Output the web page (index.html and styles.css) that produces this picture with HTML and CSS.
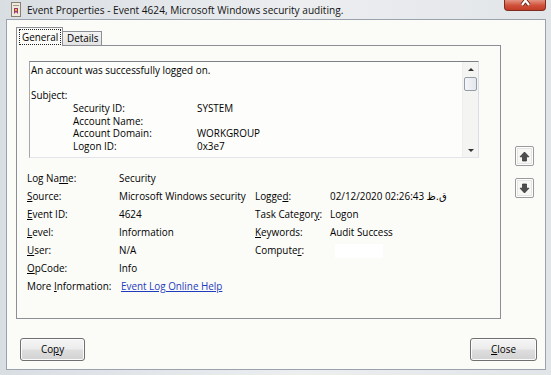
FILE: index.html
```html
<!DOCTYPE html>
<html>
<head>
<meta charset="utf-8">
<link rel="stylesheet" href="styles.css">
</head>
<body>
<div class="window">
  <div class="titlebar">
    <svg class="appicon" viewBox="0 0 10 15" width="10" height="15">
      <rect x="0.5" y="0.5" width="9" height="14" fill="#efe9dc" stroke="#8c8170"/>
      <rect x="2" y="3" width="6" height="1" fill="#a09a90"/>
      <path d="M3 6 L7 6 L7 12 L5 10 L3 12 Z" fill="#9a3b6a"/>
      <rect x="4" y="7" width="2" height="2" fill="#e2b23a"/>
    </svg>
    <span class="title">Event Properties - Event 4624, Microsoft Windows security auditing.</span>
    <div class="closebtn">
      <svg viewBox="0 0 41 10" width="41" height="10">
        <path d="M17 -3 L24 6 M24 -3 L17 6" stroke="#6b2318" stroke-width="4" fill="none"/>
        <path d="M17 -3 L24 6 M24 -3 L17 6" stroke="#ffffff" stroke-width="2.2" fill="none"/>
      </svg>
    </div>
  </div>
  <div class="client">
    <div class="main">
      <div class="tabwrap">
        <div class="tabs">
          <div class="tab active"><span class="focus">General</span></div>
          <div class="tab">Details</div>
        </div>
        <div class="panel">
          <div class="textbox">
            <div class="tb-text">
              <div class="line">An account was successfully logged on.</div>
              <div class="line">&nbsp;</div>
              <div class="line">Subject:</div>
              <div class="line kv"><span class="k">Security ID:</span><span>SYSTEM</span></div>
              <div class="line kv"><span class="k">Account Name:</span><span></span></div>
              <div class="line kv"><span class="k">Account Domain:</span><span>WORKGROUP</span></div>
              <div class="line kv"><span class="k">Logon ID:</span><span>0x3e7</span></div>
            </div>
            <div class="vscroll">
              <div class="sbtn"><span class="tri up"></span></div>
              <div class="thumb"></div>
              <div class="track"></div>
              <div class="sbtn"><span class="tri down"></span></div>
            </div>
          </div>
          <div class="details">
            <span>Log Na<u>m</u>e:</span><span>Security</span><span></span><span></span>
            <span><u>S</u>ource:</span><span>Microsoft Windows security</span><span>Logge<u>d</u>:</span><span>02/12/2020 02:26:43 <span class="ar">ظ.ق</span></span>
            <span><u>E</u>vent ID:</span><span>4624</span><span>Task Categor<u>y</u>:</span><span>Logon</span>
            <span><u>L</u>evel:</span><span>Information</span><span><u>K</u>eywords:</span><span>Audit Success</span>
            <span><u>U</u>ser:</span><span>N/A</span><span>Compute<u>r</u>:</span><span><span class="redact"></span></span>
            <span><u>O</u>pCode:</span><span>Info</span><span></span><span></span>
            <span>More <u>I</u>nformation:</span><span class="linkcell"><a class="link" href="#">Event Log Online Help</a></span><span></span><span></span>
          </div>
        </div>
      </div>
      <div class="side">
        <div class="arrowbtn">
          <svg viewBox="0 0 11 11" width="11" height="11"><path d="M5.5 1 L10 5.8 H7.5 V10 H3.5 V5.8 H1 Z" fill="#4d4d4d" stroke="#2e2e2e" stroke-width="0.7"/></svg>
        </div>
        <div class="arrowbtn">
          <svg viewBox="0 0 11 11" width="11" height="11"><path d="M5.5 10 L10 5.2 H7.5 V1 H3.5 V5.2 H1 Z" fill="#4d4d4d" stroke="#2e2e2e" stroke-width="0.7"/></svg>
        </div>
      </div>
    </div>
    <div class="footer">
      <div class="btn copy">Co<u>p</u>y</div>
      <div class="btn close"><u>C</u>lose</div>
    </div>
  </div>
</div>
</body>
</html>
```
FILE: styles.css
```css
* { box-sizing: border-box; }
body {
  margin: 0;
  background: #dfe3e7;
  font-family: "Open Sans", "DejaVu Sans", sans-serif;
  font-size: 9.9px;
  color: #000;
}
.window {
  width: 551px;
  height: 375px;
  display: flex;
  flex-direction: column;
  background: linear-gradient(to right, #d9dee3, #eceef0 55%, #e2e5e8);
  overflow: hidden;
}
.titlebar {
  height: 19px;
  flex-shrink: 0;
  display: flex;
  align-items: center;
  padding-left: 11px;
}
.appicon { margin-right: 6px; flex-shrink: 0; }
.title { font-size: 10.1px; color: #141414; }
.closebtn {
  margin-left: auto;
  margin-right: 5px;
  align-self: flex-start;
  width: 42px;
  height: 11px;
  border: 1px solid #7e2c20;
  border-top: none;
  border-radius: 0 0 4px 4px;
  background: linear-gradient(#e39483, #d0503a 55%, #c13d28);
  overflow: hidden;
}
.closebtn svg { display: block; margin-top: -1px; }
.client {
  margin: 0 5px 5px 6px;
  flex: 1;
  border: 1px solid #9aa3ad;
  background: #fbfbf8;
  padding: 7px 8px 0 9px;
  display: flex;
  flex-direction: column;
}
.main { display: flex; }
.tabwrap { width: 485px; }
.tabs { display: flex; align-items: flex-end; height: 18px; }
.tab {
  height: 14px;
  width: 39px;
  border: 1px solid #8c8f96;
  border-bottom: none;
  border-left: none;
  background: linear-gradient(#f4f4f4, #e2e2e2);
  padding-left: 4px;
  line-height: 13px;
}
.tab.active {
  height: 19px;
  width: 47px;
  margin-bottom: -1px;
  border-left: 1px solid #8c8f96;
  background: #fbfbf8;
  position: relative;
  z-index: 1;
  padding: 1px 1px 0 2px;
}
.focus {
  display: block;
  height: 16px;
  border: 1px dotted #222;
  padding-left: 2px;
  line-height: 14px;
}
.panel {
  width: 485px;
  height: 274px;
  border: 1px solid #8c8f96;
  background: #fbfbf8;
  padding: 15px 0 0 10px;
}
.textbox {
  margin-left: 2px;
  width: 450px;
  height: 97px;
  border: 1px solid;
  border-color: #7c8087 #dadde2 #e1e4e8 #a4a8ae;
  background: #fdfdfb;
  display: flex;
}
.tb-text {
  flex: 1;
  padding: 2px 0 0 1px;
  overflow: hidden;
}
.line { height: 12.7px; line-height: 12.7px; white-space: nowrap; }
.kv { display: flex; padding-left: 42px; }
.kv .k { width: 124px; }
.vscroll {
  width: 16px;
  display: flex;
  flex-direction: column;
  background: #f4f4f2;
  border-left: 1px solid #eeeeec;
}
.sbtn {
  height: 14px;
  display: flex;
  align-items: center;
  justify-content: center;
}
.tri { width: 0; height: 0; border-left: 3px solid transparent; border-right: 3px solid transparent; }
.tri.up { border-bottom: 3px solid #333; }
.tri.down { border-top: 3px solid #333; }
.thumb {
  height: 14px;
  margin: 1px 0 0 1px;
  width: 13px;
  border: 1px solid #959ea8;
  border-radius: 2px;
  background: linear-gradient(to right, #f5f6f8, #e3e7ec);
}
.track { flex: 1; }
.details {
  margin-top: 11px;
  display: grid;
  grid-template-columns: 92px 136px 75px auto;
  grid-auto-rows: 18px;
  align-items: center;
  white-space: nowrap;
}
.ar {
  font-family: "DejaVu Sans", sans-serif;
  font-size: 10px;
  direction: ltr;
  unicode-bidi: bidi-override;
}
.redact {
  display: inline-block;
  width: 48px;
  height: 14px;
  margin-left: 5px;
  background: #ffffff;
  vertical-align: middle;
}
.linkcell { padding-left: 2px; }
.link { color: #1f3cbd; text-decoration: underline; }
u { text-decoration-thickness: 1px; }
.side {
  margin-left: 14px;
  padding-top: 119px;
  display: flex;
  flex-direction: column;
  gap: 12px;
}
.arrowbtn {
  width: 19px;
  height: 20px;
  border: 1px solid #9a9a9a;
  border-radius: 2px;
  background: #f7f7f5;
  box-shadow: inset 0 0 0 1px #ffffff, inset 0 0 0 2px #e4e4e2;
  display: flex;
  align-items: center;
  justify-content: center;
}
.arrowbtn svg { display: block; }
.footer {
  margin-top: 19px;
  padding-left: 4px;
  display: flex;
  justify-content: space-between;
}
.btn {
  height: 23px;
  border: 1px solid #707070;
  border-radius: 3px;
  background: linear-gradient(#f5f5f5 0%, #ececec 48%, #dedede 52%, #d2d2d2 100%);
  box-shadow: inset 0 0 0 1px #fbfbfb;
  display: flex;
  align-items: center;
  justify-content: center;
  line-height: 1;
}
.copy { width: 65px; }
.close { width: 67px; }
```
